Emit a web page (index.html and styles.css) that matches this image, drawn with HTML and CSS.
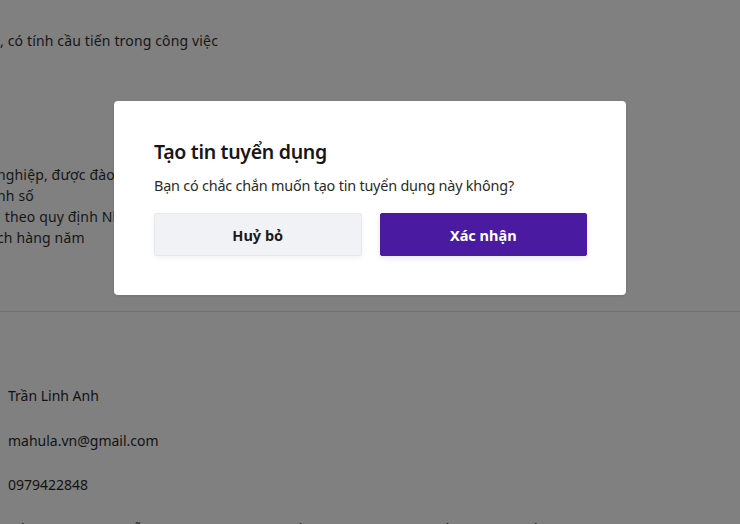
FILE: index.html
```html
<!DOCTYPE html>
<html lang="vi">
<head>
<meta charset="utf-8">
<title>Tạo tin tuyển dụng</title>
<link rel="stylesheet" href="styles.css">
</head>
<body>
<div class="page">
  <section class="job">
    <p class="line first">, có tính cầu tiến trong công việc</p>
    <div class="benefits">
      <p class="line">nghiệp, được đào tạo nâng cao nghiệp vụ chuyên môn</p>
      <p class="line">nh số</p>
      <p class="line">. theo quy định Nhà nước</p>
      <p class="line">ch hàng năm</p>
    </div>
  </section>
  <hr class="divider">
  <section class="contact">
    <p class="cline">Trần Linh Anh</p>
    <p class="cline">mahula.vn@gmail.com</p>
    <p class="cline">0979422848</p>
    <p class="cline">Số 73, đường Nguyễn Trường Tộ, phường Bến Thành, quận 1, TP Hồ Chí Minh, Hồ Chí Minh</p>
  </section>
</div>
<div class="modal" role="dialog">
  <h2 class="modal-title">Tạo tin tuyển dụng</h2>
  <p class="modal-text">Bạn có chắc chắn muốn tạo tin tuyển dụng này không?</p>
  <div class="modal-actions">
    <button class="btn btn-cancel">Huỷ bỏ</button>
    <button class="btn btn-confirm">Xác nhận</button>
  </div>
</div>
</body>
</html>
```
FILE: styles.css
```css
html, body {
  margin: 0;
  padding: 0;
}
body {
  width: 740px;
  height: 524px;
  overflow: hidden;
  background: #808080;
  font-family: "Noto Sans", "Liberation Sans", sans-serif;
  color: #161616;
}
.page {
  display: flex;
  flex-direction: column;
}
.job {
  padding-top: 30px;
}
.line {
  margin: 0;
  font-size: 14px;
  line-height: 21px;
  letter-spacing: 0.15px;
  white-space: nowrap;
}
.first {
  margin-left: 0;
}
.benefits {
  margin-top: 113px;
  margin-left: -3px;
}
.divider {
  margin: 63px 0 0 0;
  border: 0;
  border-top: 1px solid #727272;
  height: 0;
}
.contact {
  padding: 73px 0 0 8px;
  display: flex;
  flex-direction: column;
  gap: 23.5px;
}
.cline {
  margin: 0;
  font-size: 14px;
  line-height: 21px;
  color: #121212;
  white-space: nowrap;
}
.modal {
  position: absolute;
  left: 114px;
  top: 101px;
  width: 512px;
  height: 194px;
  box-sizing: border-box;
  padding: 37px 39px 0 40px;
  background: #ffffff;
  border-radius: 4px;
  box-shadow: 0 1px 3px rgba(0, 0, 0, 0.12);
}
.modal-title {
  margin: 0;
  font-size: 19.5px;
  line-height: 28px;
  font-weight: 600;
  color: #161616;
  letter-spacing: -0.3px;
}
.modal-text {
  margin: 9px 0 0 0;
  font-size: 14.4px;
  line-height: 22px;
  color: #2a2a2a;
  letter-spacing: -0.2px;
}
.modal-actions {
  margin-top: 16px;
  display: grid;
  grid-template-columns: 1fr 1fr;
  gap: 18px;
}
.btn {
  height: 43px;
  border-radius: 2px;
  font-family: "Noto Sans", "Liberation Sans", sans-serif;
  font-size: 14.5px;
  font-weight: 700;
  cursor: pointer;
}
.btn-cancel {
  background: #f1f2f6;
  border: 1px solid #e7e8ec;
  color: #1a1a1a;
  box-shadow: 0 2px 5px rgba(0, 0, 0, 0.05);
}
.btn-confirm {
  background: #4a1ba1;
  border: 1px solid #4a1ba1;
  color: #ffffff;
  box-shadow: 0 2px 6px rgba(74, 27, 161, 0.12);
}
```
